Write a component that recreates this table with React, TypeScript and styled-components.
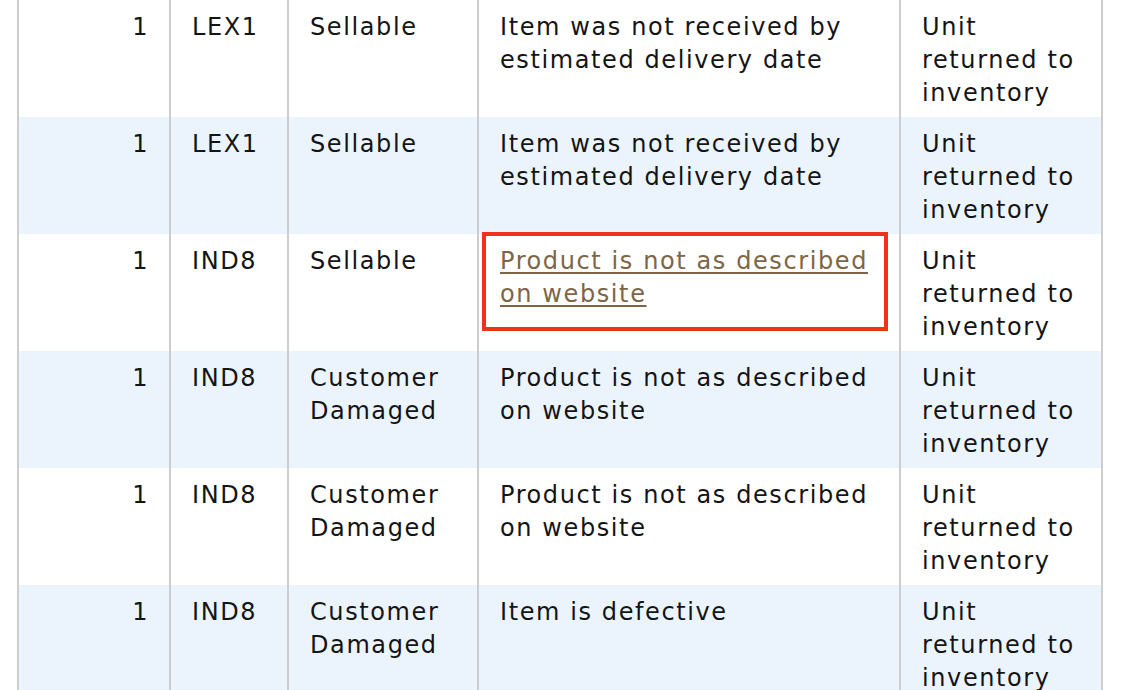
import React from "react";
import styled, { createGlobalStyle } from "styled-components";

const GlobalStyle = createGlobalStyle`
  html, body {
    margin: 0;
    padding: 0;
    background: #ffffff;
  }
  body {
    font-family: "DejaVu Sans", Verdana, sans-serif;
    color: #141414;
  }
`;

const Page = styled.div`
  width: 1127px;
  height: 690px;
  overflow: hidden;
  padding-left: 17px;
  box-sizing: border-box;
`;

const Table = styled.div`
  display: flex;
  flex-direction: column;
`;

const Row = styled.div<{ $shaded: boolean }>`
  display: grid;
  grid-template-columns: 152px 118px 190px 422px 204px;
  width: 1086px;
  height: 117px;
  background: ${(p) => (p.$shaded ? "#ebf4fd" : "#ffffff")};
`;

const Cell = styled.div<{ $align?: "left" | "right"; $last?: boolean }>`
  position: relative;
  box-sizing: border-box;
  border-left: 2px solid #cdcdcd;
  border-right: ${(p) => (p.$last ? "2px solid #cdcdcd" : "none")};
  padding: 11px 20px 0 21px;
  font-size: 24px;
  line-height: 33px;
  letter-spacing: 1.6px;
  text-align: ${(p) => p.$align ?? "left"};
  white-space: nowrap;
`;

const ReasonLink = styled.a`
  color: #7d6545;
  text-decoration: underline;
  text-decoration-thickness: 2px;
  text-underline-offset: 3px;
  cursor: pointer;
`;

const Highlight = styled.div`
  position: absolute;
  left: 3px;
  top: -2px;
  width: 406px;
  height: 99px;
  box-sizing: border-box;
  border: 4px solid #f0321a;
  pointer-events: none;
`;

type RowData = {
  qty: string;
  fc: string;
  disposition: string[];
  reason: string[];
  status: string[];
  highlighted?: boolean;
};

const rows: RowData[] = [
  {
    qty: "1",
    fc: "LEX1",
    disposition: ["Sellable"],
    reason: ["Item was not received by", "estimated delivery date"],
    status: ["Unit", "returned to", "inventory"],
  },
  {
    qty: "1",
    fc: "LEX1",
    disposition: ["Sellable"],
    reason: ["Item was not received by", "estimated delivery date"],
    status: ["Unit", "returned to", "inventory"],
  },
  {
    qty: "1",
    fc: "IND8",
    disposition: ["Sellable"],
    reason: ["Product is not as described", "on website"],
    status: ["Unit", "returned to", "inventory"],
    highlighted: true,
  },
  {
    qty: "1",
    fc: "IND8",
    disposition: ["Customer", "Damaged"],
    reason: ["Product is not as described", "on website"],
    status: ["Unit", "returned to", "inventory"],
  },
  {
    qty: "1",
    fc: "IND8",
    disposition: ["Customer", "Damaged"],
    reason: ["Product is not as described", "on website"],
    status: ["Unit", "returned to", "inventory"],
  },
  {
    qty: "1",
    fc: "IND8",
    disposition: ["Customer", "Damaged"],
    reason: ["Item is defective"],
    status: ["Unit", "returned to", "inventory"],
  },
];

const Lines: React.FC<{ lines: string[] }> = ({ lines }) => (
  <>
    {lines.map((l, i) => (
      <React.Fragment key={i}>
        {i > 0 && <br />}
        {l}
      </React.Fragment>
    ))}
  </>
);

export default function App() {
  return (
    <>
      <GlobalStyle />
      <Page>
        <Table>
          {rows.map((r, i) => (
            <Row key={i} $shaded={i % 2 === 1}>
              <Cell $align="right">{r.qty}</Cell>
              <Cell>{r.fc}</Cell>
              <Cell>
                <Lines lines={r.disposition} />
              </Cell>
              <Cell>
                {r.highlighted ? (
                  <>
                    <ReasonLink>
                      <Lines lines={r.reason} />
                    </ReasonLink>
                    <Highlight />
                  </>
                ) : (
                  <Lines lines={r.reason} />
                )}
              </Cell>
              <Cell $last>
                <Lines lines={r.status} />
              </Cell>
            </Row>
          ))}
        </Table>
      </Page>
    </>
  );
}
